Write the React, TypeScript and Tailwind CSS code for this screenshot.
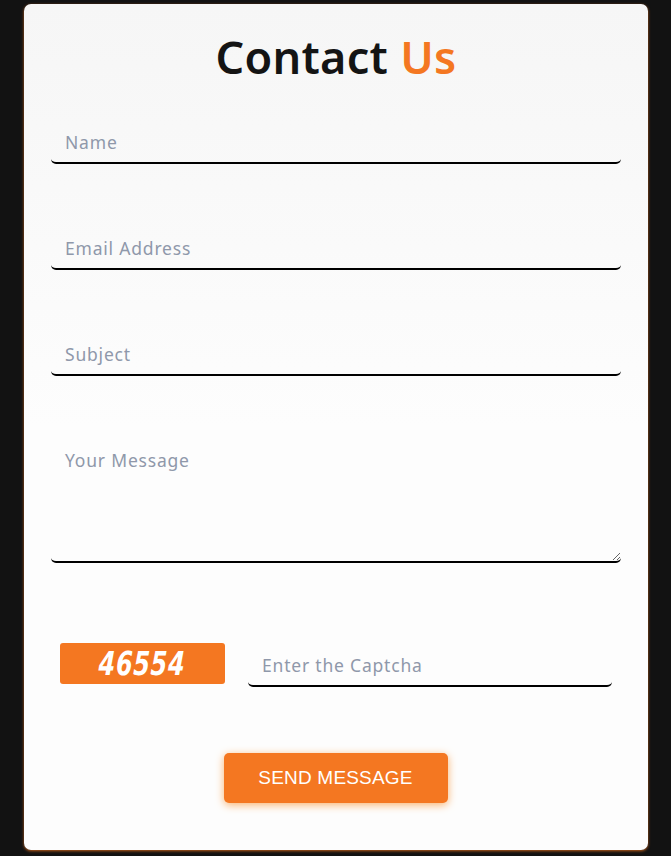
import React, { useState } from "react";

const fieldClass =
  "w-full h-[46px] px-[14px] bg-transparent rounded-[5px] border-b-2 border-black text-[17.5px] font-normal tracking-[0.8px] text-gray-800 placeholder:text-[#8f98aa] outline-none";

const App = () => {
  const [captcha, setCaptcha] = useState("");

  return (
    <div
      className="w-[671px] h-[856px] bg-[#121212] pl-[24px] pt-[4px] overflow-hidden"
      style={{ fontFamily: "'Noto Sans', 'Open Sans', sans-serif" }}
    >
      {/* card */}
      <div className="w-[624px] h-[846px] rounded-[7px] bg-gradient-to-b from-[#f6f6f6] via-[#fdfdfd] to-[#fdfdfd] shadow-[0_1px_3px_#c2601c] flex flex-col items-center px-[27px]">
        <h1 className="mt-[25px] text-[45px] leading-[56px] font-semibold tracking-[0.3px] text-[#141414]">
          Contact <span className="text-[#f47721]">Us</span>
        </h1>

        {/* fields */}
        <form className="w-full flex flex-col mt-[33px]" onSubmit={(e) => e.preventDefault()}>
          <input className={`${fieldClass} pt-[3px]`} placeholder="Name" />
          <input className={`${fieldClass} pt-[3px] mt-[60px]`} placeholder="Email Address" />
          <input className={`${fieldClass} pt-[3px] mt-[60px]`} placeholder="Subject" />
          <textarea
            className={`${fieldClass} mt-[60px] h-[127px] pt-[11px]`}
            placeholder="Your Message"
          />

          {/* captcha row */}
          <div className="flex items-center mt-[78px] px-[9px]">
            <div className="w-[165px] h-[41px] mt-[-1px] rounded-[3px] bg-[#f47721] flex items-center justify-center">
              <span
                className="text-white text-[33px] leading-none font-bold italic tracking-[1px] scale-x-[0.8] -skew-x-3"
                style={{ fontFamily: "'Liberation Sans Narrow', 'DejaVu Sans Condensed', sans-serif" }}
              >
                46554
              </span>
            </div>
            <input
              className={`${fieldClass} pt-[3px] ml-[23px] flex-1`}
              placeholder="Enter the Captcha"
              value={captcha}
              onChange={(e) => setCaptcha(e.target.value)}
            />
          </div>

          <button
            type="submit"
            className="self-center mt-[66px] w-[224px] h-[50px] rounded-[5px] bg-[#f47721] text-white text-[19px] tracking-[0.2px] shadow-[0_2px_8px_#f9b26e] -ml-[1px]"
            style={{ fontFamily: "'Liberation Sans', Arial, sans-serif" }}
          >
            SEND MESSAGE
          </button>
        </form>
      </div>
    </div>
  );
};

export default App;
